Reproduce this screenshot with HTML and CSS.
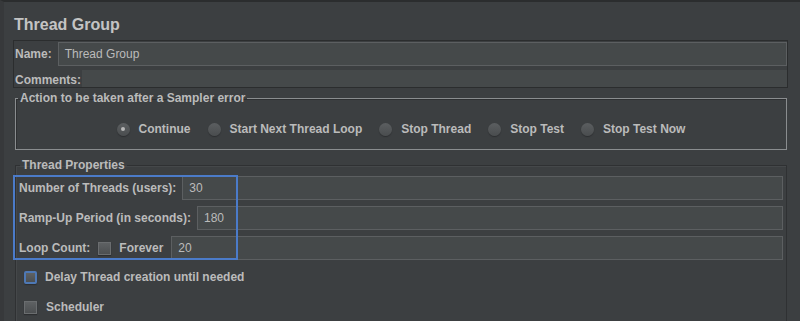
FILE: index.html
```html
<!DOCTYPE html>
<html lang="en">

<head>
  <meta charset="UTF-8">
  <meta name="viewport" content="width=device-width, initial-scale=1.0">
  <title>Thread Group</title>
  <link rel="stylesheet" href="styles.css">
</head>

<body>
  <div class="page">
    <h1 class="title">Thread Group</h1>

    <div class="name-panel">
      <div class="name-row">
        <span class="label">Name:</span>
        <span class="field">Thread Group</span>
      </div>
      <div class="comments-row">
        <span class="label">Comments:</span>
        <span class="comments-area"></span>
      </div>
    </div>

    <fieldset class="group action">
      <legend>Action to be taken after a Sampler error</legend>
      <div class="radios">
        <label class="radio-item"><span class="radio checked"></span>Continue</label>
        <label class="radio-item"><span class="radio"></span>Start Next Thread Loop</label>
        <label class="radio-item"><span class="radio"></span>Stop Thread</label>
        <label class="radio-item"><span class="radio"></span>Stop Test</label>
        <label class="radio-item"><span class="radio"></span>Stop Test Now</label>
      </div>
    </fieldset>

    <fieldset class="group props">
      <legend>Thread Properties</legend>
      <div class="prop-rows">
        <div class="prop-row">
          <span class="label">Number of Threads (users):</span>
          <span class="field">30</span>
        </div>
        <div class="prop-row">
          <span class="label">Ramp-Up Period (in seconds):</span>
          <span class="field">180</span>
        </div>
        <div class="prop-row loop">
          <span class="label">Loop Count:</span>
          <span class="check"></span>
          <span class="label forever">Forever</span>
          <span class="field">20</span>
        </div>
        <!-- 标注框 -->
        <div class="mark"></div>
      </div>
      <div class="check-row delay">
        <span class="check focus"></span>
        <span class="label">Delay Thread creation until needed</span>
      </div>
      <div class="check-row sched">
        <span class="check"></span>
        <span class="label">Scheduler</span>
      </div>
    </fieldset>
  </div>
</body>

</html>
```

FILE: styles.css
```css
html,
body {
  margin: 0;
  padding: 0;
  height: 100%;
  overflow: hidden;
}
body {
  background-color: #3c3f41;
  border-top: 2px solid #2b2d2e;
  border-left: 4px solid #37393b;
  box-sizing: border-box;
  font-family: "Liberation Sans", Arial, sans-serif;
  font-size: 12px;
  color: #bbbbbb;
}
.page {
  padding: 0 12px 0 9px;
}
.title {
  margin: 13px 0 5px 1px;
  font-size: 16px;
  line-height: 20px;
  font-weight: bold;
  color: #c4c4c4;
}
.label {
  font-weight: bold;
  white-space: nowrap;
  line-height: 14px;
}
.field {
  flex: 1;
  height: 22px;
  line-height: 22px;
  padding-left: 6px;
  background-color: #45494a;
  border: 1px solid #5c5f61;
}

/* 名称和注释 */
.name-panel {
  border: 1px solid #2b2d2e;
  padding-left: 1px;
  height: 46px;
}
.name-row {
  display: flex;
  align-items: center;
  gap: 6px;
  margin-top: 1px;
}
.comments-row {
  display: flex;
  align-items: flex-end;
  gap: 1px;
  margin-top: 4px;
}
.comments-area {
  flex: 1;
  height: 17px;
  background-color: #45494a;
}

/* 分组框 */
.group {
  margin: 0 1px 0 2px;
  padding: 0 3px;
  border: 1px solid #8a8d8f;
  min-width: 0;
}
.group legend {
  padding: 0 2px;
  margin-left: -1px;
  font-weight: bold;
  line-height: 14px;
}
.action {
  margin-top: 3px;
  height: 59px;
  box-sizing: border-box;
  box-shadow: inset 1px 1px 0 #2e3032;
}
.props {
  margin-top: 8px;
  height: 220px;
  border-color: #2f3133;
  box-shadow: inset 1px 1px 0 #45484a;
}
.props legend {
  margin-left: 1px;
}

/* 单选按钮 */
.radios {
  display: flex;
  justify-content: center;
  gap: 17px;
  margin-top: 17px;
}
.radio-item {
  display: flex;
  align-items: center;
  gap: 9px;
  font-weight: bold;
  line-height: 14px;
}
.radio {
  width: 13px;
  height: 13px;
  border-radius: 50%;
  background: linear-gradient(#5b5e60, #4a4d4f);
  box-shadow: 0 1px 1px #2c2e30;
  display: flex;
  align-items: center;
  justify-content: center;
}
.radio.checked::after {
  content: "";
  width: 4px;
  height: 4px;
  border-radius: 50%;
  background-color: #b8b8b8;
}

/* 线程属性 */
.prop-rows {
  position: relative;
  display: flex;
  flex-direction: column;
  gap: 6px;
  margin-top: 4px;
}
.prop-row {
  display: flex;
  align-items: center;
  gap: 6px;
}
.loop .check {
  margin-left: 2px;
}
.loop .forever {
  margin-left: 2px;
  margin-right: 2px;
}
.check {
  width: 13px;
  height: 13px;
  background: linear-gradient(#5e6163, #4c4f51);
  border: 1px solid #6a6d6f;
  box-shadow: 0 1px 1px #2c2e30;
  box-sizing: border-box;
}
.check.focus {
  border: 2px solid #4e78b4;
  border-radius: 2px;
}
.mark {
  position: absolute;
  left: -6px;
  top: -1px;
  width: 225px;
  height: 85px;
  box-sizing: border-box;
  border: 2px solid #4b7bc9;
}
.check-row {
  display: flex;
  align-items: center;
  gap: 8px;
  padding-left: 5px;
}
.delay {
  margin-top: 10px;
}
.sched {
  margin-top: 16px;
}
.sched .label {
  margin-left: 1px;
}
```
